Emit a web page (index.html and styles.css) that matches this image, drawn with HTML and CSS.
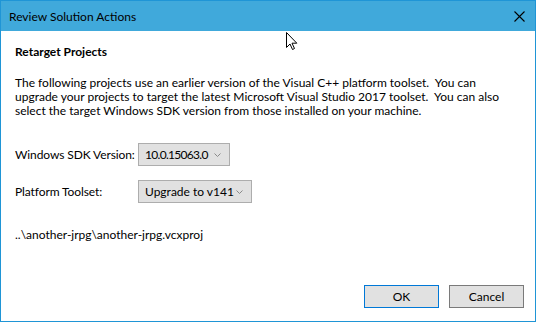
FILE: index.html
```html
<!DOCTYPE html>
<html>
<head>
<meta charset="utf-8">
<link rel="stylesheet" href="styles.css">
</head>
<body>
<div class="window">
  <div class="titlebar">
    <span class="title">Review Solution Actions</span>
    <span class="close">
      <svg width="11" height="11" viewBox="0 0 11 11"><path d="M0.5 0.5 L10.5 10.5 M10.5 0.5 L0.5 10.5" stroke="#000" stroke-width="1.1" fill="none"/></svg>
    </span>
  </div>
  <div class="content">
    <h1 class="heading">Retarget Projects</h1>
    <p class="desc">The following projects use an earlier version of the Visual C++ platform toolset.&nbsp; You can<br>upgrade your projects to target the latest Microsoft Visual Studio 2017 toolset.&nbsp; You can also<br>select the target Windows SDK version from those installed on your machine.</p>
    <div class="row row-first">
      <span class="label">Windows SDK Version:</span>
      <span class="combo combo-sdk"><span class="combo-text">10.0.15063.0</span><svg class="chev" width="7" height="4" viewBox="0 0 7 4"><path d="M0.5 0.5 L3.5 3.5 L6.5 0.5" stroke="#8a8a8a" fill="none" stroke-width="1"/></svg></span>
    </div>
    <div class="row">
      <span class="label">Platform Toolset:</span>
      <span class="combo combo-tool"><span class="combo-text">Upgrade to v141</span><svg class="chev" width="7" height="4" viewBox="0 0 7 4"><path d="M0.5 0.5 L3.5 3.5 L6.5 0.5" stroke="#8a8a8a" fill="none" stroke-width="1"/></svg></span>
    </div>
    <div class="path">..\another-jrpg\another-jrpg.vcxproj</div>
    <div class="buttons">
      <button class="btn btn-default">OK</button>
      <button class="btn btn-cancel">Cancel</button>
    </div>
  </div>
  <svg class="cursor" width="12" height="19" viewBox="0 0 12 19"><path d="M0.5 0.5 L0.5 15.5 L4 12 L6.5 17.5 L8.5 16.5 L6 11.2 L10.8 11.2 Z" fill="#fff" stroke="#000" stroke-width="1" stroke-linejoin="miter"/></svg>
</div>
</body>
</html>
```
FILE: styles.css
```css
html, body {
  margin: 0;
  padding: 0;
  background: #fff;
}
.window {
  position: relative;
  width: 536px;
  height: 322px;
  box-sizing: border-box;
  border: 1px solid #1f95d6;
  display: flex;
  flex-direction: column;
  font-family: "Lato", "Noto Sans", sans-serif;
  font-size: 12px;
  color: #000;
  overflow: hidden;
  white-space: nowrap;
}
.titlebar {
  height: 30px;
  background: #40a9db;
  display: flex;
  align-items: center;
  justify-content: space-between;
  padding: 0 10px 0 8px;
  flex: none;
}
.title {
  font-size: 12px;
}
.close {
  display: flex;
  width: 11px;
  height: 11px;
}
.content {
  flex: 1;
  display: flex;
  flex-direction: column;
  padding: 13px 11px 0 14px;
}
.heading {
  margin: 0;
  font-size: 12px;
  font-weight: bold;
  line-height: 16px;
}
.desc {
  margin: 16px 0 0 0;
  line-height: 14px;
}
.row {
  display: flex;
  align-items: center;
}
.row-first {
  margin-top: 25px;
}
.row + .row {
  margin-top: 14px;
}
.label {
  width: 123px;
  letter-spacing: -0.1px;
}
.combo {
  display: flex;
  align-items: center;
  justify-content: space-between;
  height: 23px;
  box-sizing: border-box;
  border: 1px solid #adadad;
  background: #e1e1e1;
  padding: 0 8px 0 6px;
}
.combo-sdk { width: 92px; }
.combo-sdk .combo-text { letter-spacing: -0.7px; }
.combo-tool { width: 114px; }
.chev { flex: none; }
.path {
  margin-top: 24px;
}
.buttons {
  margin-top: auto;
  margin-bottom: 13px;
  display: flex;
  justify-content: flex-end;
  gap: 10px;
}
.btn {
  width: 75px;
  height: 23px;
  box-sizing: border-box;
  border: 1px solid #adadad;
  background: #e1e1e1;
  font-family: inherit;
  font-size: 12px;
  color: #000;
  padding: 0;
}
.btn-default {
  border-color: #0078d7;
}
.btn-cancel {
  border-color: #7a7a7a;
}
.cursor {
  position: absolute;
  left: 285px;
  top: 31px;
}
```
